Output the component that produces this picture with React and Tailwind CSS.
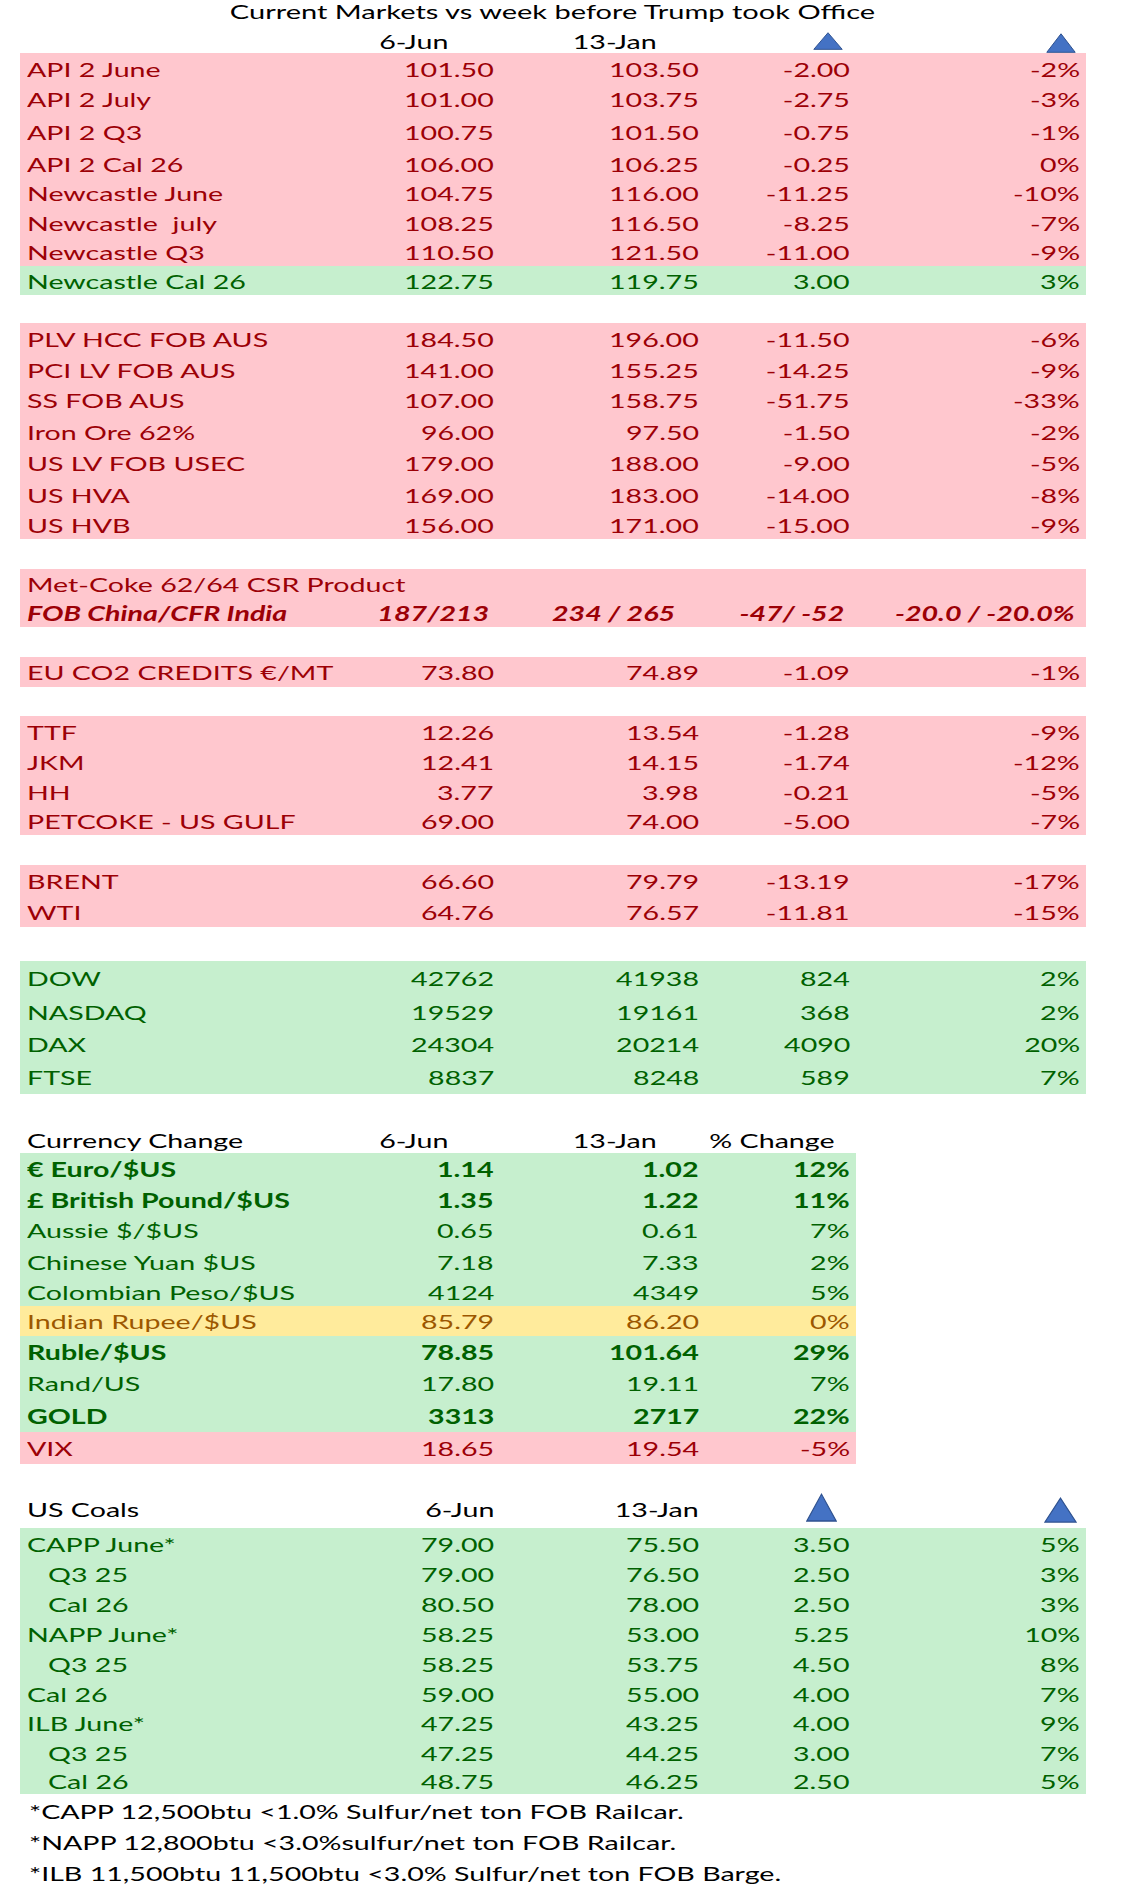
import React from "react";

const COLS = "grid grid-cols-[310px_170px_205px_151px_230px]";
const COLS4 = "grid grid-cols-[310px_170px_205px_151px]";

const TONE = {
  red: "bg-[#FFC7CE] text-[#9C0006]",
  green: "bg-[#C6EFCE] text-[#006100]",
  yellow: "bg-[#FFEB9C] text-[#9C5700]",
};

function L({ children }) {
  return <span className="inline-block origin-left scale-x-[1.43] whitespace-pre">{children}</span>;
}
function R({ children }) {
  return <span className="inline-block origin-right scale-x-[1.43] whitespace-pre">{children}</span>;
}

function Tri({ cls }) {
  return (
    <svg viewBox="0 0 30 20" preserveAspectRatio="none" className={cls}>
      <polygon points="15,0.8 29.2,19.3 0.8,19.3" fill="#4472C4" stroke="#2F528F" strokeWidth="1" />
    </svg>
  );
}

function Row({ r, four }) {
  return (
    <div className={`${four ? COLS4 : COLS} ${TONE[r.t]} ${r.h} items-center ${r.b ? "font-bold" : ""}`}>
      <div className={r.i ? "pl-[28px]" : "pl-[7px]"}><L>{r.l}</L></div>
      {r.v.map((v, k) => (
        <div key={k} className="text-right pr-[6px]"><R>{v}</R></div>
      ))}
    </div>
  );
}

const block1 = [
  { l: "API 2 June", v: ["101.50", "103.50", "-2.00", "-2%"], t: "red", h: "h-[31px]" },
  { l: "API 2 July", v: ["101.00", "103.75", "-2.75", "-3%"], t: "red", h: "h-[30px]" },
  { l: "API 2 Q3", v: ["100.75", "101.50", "-0.75", "-1%"], t: "red", h: "h-[35px]" },
  { l: "API 2 Cal 26", v: ["106.00", "106.25", "-0.25", "0%"], t: "red", h: "h-[29px]" },
  { l: "Newcastle June", v: ["104.75", "116.00", "-11.25", "-10%"], t: "red", h: "h-[29px]" },
  { l: "Newcastle  july", v: ["108.25", "116.50", "-8.25", "-7%"], t: "red", h: "h-[31px]" },
  { l: "Newcastle Q3", v: ["110.50", "121.50", "-11.00", "-9%"], t: "red", h: "h-[28px]" },
  { l: "Newcastle Cal 26", v: ["122.75", "119.75", "3.00", "3%"], t: "green", h: "h-[29px]" },
];

const block2 = [
  { l: "PLV HCC FOB AUS", v: ["184.50", "196.00", "-11.50", "-6%"], t: "red", h: "h-[32px]" },
  { l: "PCI LV FOB AUS", v: ["141.00", "155.25", "-14.25", "-9%"], t: "red", h: "h-[29px]" },
  { l: "SS FOB AUS", v: ["107.00", "158.75", "-51.75", "-33%"], t: "red", h: "h-[32px]" },
  { l: "Iron Ore 62%", v: ["96.00", "97.50", "-1.50", "-2%"], t: "red", h: "h-[31px]" },
  { l: "US LV FOB USEC", v: ["179.00", "188.00", "-9.00", "-5%"], t: "red", h: "h-[32px]" },
  { l: "US HVA", v: ["169.00", "183.00", "-14.00", "-8%"], t: "red", h: "h-[31px]" },
  { l: "US HVB", v: ["156.00", "171.00", "-15.00", "-9%"], t: "red", h: "h-[29px]" },
];

const eu = [
  { l: "EU CO2 CREDITS €/MT", v: ["73.80", "74.89", "-1.09", "-1%"], t: "red", h: "h-[30px]" },
];

const gas = [
  { l: "TTF", v: ["12.26", "13.54", "-1.28", "-9%"], t: "red", h: "h-[31px]" },
  { l: "JKM", v: ["12.41", "14.15", "-1.74", "-12%"], t: "red", h: "h-[30px]" },
  { l: "HH", v: ["3.77", "3.98", "-0.21", "-5%"], t: "red", h: "h-[30px]" },
  { l: "PETCOKE - US GULF", v: ["69.00", "74.00", "-5.00", "-7%"], t: "red", h: "h-[28px]" },
];

const oil = [
  { l: "BRENT", v: ["66.60", "79.79", "-13.19", "-17%"], t: "red", h: "h-[31px]" },
  { l: "WTI", v: ["64.76", "76.57", "-11.81", "-15%"], t: "red", h: "h-[31px]" },
];

const idx = [
  { l: "DOW", v: ["42762", "41938", "824", "2%"], t: "green", h: "h-[34px]" },
  { l: "NASDAQ", v: ["19529", "19161", "368", "2%"], t: "green", h: "h-[33px]" },
  { l: "DAX", v: ["24304", "20214", "4090", "20%"], t: "green", h: "h-[32px]" },
  { l: "FTSE", v: ["8837", "8248", "589", "7%"], t: "green", h: "h-[34px]" },
];

const fx = [
  { l: "€ Euro/$US", v: ["1.14", "1.02", "12%"], t: "green", h: "h-[32px]", b: true },
  { l: "£ British Pound/$US", v: ["1.35", "1.22", "11%"], t: "green", h: "h-[29px]", b: true },
  { l: "Aussie $/$US", v: ["0.65", "0.61", "7%"], t: "green", h: "h-[32px]" },
  { l: "Chinese Yuan $US", v: ["7.18", "7.33", "2%"], t: "green", h: "h-[31px]" },
  { l: "Colombian Peso/$US", v: ["4124", "4349", "5%"], t: "green", h: "h-[29px]" },
  { l: "Indian Rupee/$US", v: ["85.79", "86.20", "0%"], t: "yellow", h: "h-[30px]" },
  { l: "Ruble/$US", v: ["78.85", "101.64", "29%"], t: "green", h: "h-[31px]", b: true },
  { l: "Rand/US", v: ["17.80", "19.11", "7%"], t: "green", h: "h-[32px]" },
  { l: "GOLD", v: ["3313", "2717", "22%"], t: "green", h: "h-[33px]", b: true },
  { l: "VIX", v: ["18.65", "19.54", "-5%"], t: "red", h: "h-[32px]" },
];

const coals = [
  { l: "CAPP June*", v: ["79.00", "75.50", "3.50", "5%"], t: "green", h: "h-[31px]" },
  { l: "Q3 25", v: ["79.00", "76.50", "2.50", "3%"], t: "green", h: "h-[30px]", i: true },
  { l: "Cal 26", v: ["80.50", "78.00", "2.50", "3%"], t: "green", h: "h-[30px]", i: true },
  { l: "NAPP June*", v: ["58.25", "53.00", "5.25", "10%"], t: "green", h: "h-[30px]" },
  { l: "Q3 25", v: ["58.25", "53.75", "4.50", "8%"], t: "green", h: "h-[30px]", i: true },
  { l: "Cal 26", v: ["59.00", "55.00", "4.00", "7%"], t: "green", h: "h-[29px]" },
  { l: "ILB June*", v: ["47.25", "43.25", "4.00", "9%"], t: "green", h: "h-[30px]" },
  { l: "Q3 25", v: ["47.25", "44.25", "3.00", "7%"], t: "green", h: "h-[29px]", i: true },
  { l: "Cal 26", v: ["48.75", "46.25", "2.50", "5%"], t: "green", h: "h-[27px]", i: true },
];

const notes = [
  "*CAPP 12,500btu <1.0% Sulfur/net ton FOB Railcar.",
  "*NAPP 12,800btu <3.0%sulfur/net ton FOB Railcar.",
  "*ILB 11,500btu 11,500btu <3.0% Sulfur/net ton FOB Barge.",
];

export default function App() {
  return (
    <div className="w-[1145px] min-h-[1892px] bg-white font-[Lato,sans-serif] text-[20px] leading-none">
      <div className="ml-[20px] w-[1066px]">
        <div className="h-[28px] flex items-center justify-center pb-[6px] text-black">
          <span className="inline-block origin-center scale-x-[1.45] whitespace-pre">
            Current Markets vs week before Trump took Office
          </span>
        </div>
        <div className={`${COLS} h-[25px] text-black`}>
          <div />
          <div className="self-center text-right pr-[52px]"><R>6-Jun</R></div>
          <div className="self-center text-right pr-[48px]"><R>13-Jan</R></div>
          <div className="flex justify-end items-end pr-[13px] pb-[3px]"><Tri cls="w-[30px] h-[18px]" /></div>
          <div className="flex justify-end items-end pr-[10px]"><Tri cls="w-[30px] h-[20px]" /></div>
        </div>

        <div>{block1.map((r, k) => <Row key={k} r={r} />)}</div>

        <div className="mt-[28px]">{block2.map((r, k) => <Row key={k} r={r} />)}</div>

        <div className={`mt-[30px] ${TONE.red}`}>
          <div className="h-[29px] flex items-center pl-[7px]"><L>Met-Coke 62/64 CSR Product</L></div>
          <div className={`${COLS} h-[29px] items-center font-bold italic`}>
            <div className="pl-[7px]"><L>FOB China/CFR India</L></div>
            <div className="text-right pr-[11px]"><R>187/213</R></div>
            <div className="text-right pr-[30px]"><R>234 / 265</R></div>
            <div className="text-right pr-[12px]"><R>-47/ -52</R></div>
            <div className="text-right pr-[11px]"><R>-20.0 / -20.0%</R></div>
          </div>
        </div>

        <div className="mt-[30px]">{eu.map((r, k) => <Row key={k} r={r} />)}</div>
        <div className="mt-[29px]">{gas.map((r, k) => <Row key={k} r={r} />)}</div>
        <div className="mt-[30px]">{oil.map((r, k) => <Row key={k} r={r} />)}</div>
        <div className="mt-[34px]">{idx.map((r, k) => <Row key={k} r={r} />)}</div>

        <div className={`${COLS4} mt-[33px] h-[26px] items-center text-black`}>
          <div className="pl-[7px]"><L>Currency Change</L></div>
          <div className="text-right pr-[52px]"><R>6-Jun</R></div>
          <div className="text-right pr-[48px]"><R>13-Jan</R></div>
          <div className="text-right pr-[21px]"><R>% Change</R></div>
        </div>
        <div className="w-[836px]">{fx.map((r, k) => <Row key={k} r={r} four />)}</div>

        <div className={`${COLS} mt-[26px] h-[38px] text-black`}>
          <div className="self-center pl-[7px]"><L>US Coals</L></div>
          <div className="self-center text-right pr-[6px]"><R>6-Jun</R></div>
          <div className="self-center text-right pr-[6px]"><R>13-Jan</R></div>
          <div className="flex justify-end items-start pt-[3px] pr-[19px]"><Tri cls="w-[31px] h-[29px]" /></div>
          <div className="flex justify-end items-start pt-[7px] pr-[9px]"><Tri cls="w-[33px] h-[26px]" /></div>
        </div>
        <div>{coals.map((r, k) => <Row key={k} r={r} />)}</div>

        <div className="mt-[1px] text-black">
          {notes.map((n, k) => (
            <div key={k} className="h-[31px] flex items-center pl-[9px]"><L>{n}</L></div>
          ))}
        </div>
      </div>
    </div>
  );
}
